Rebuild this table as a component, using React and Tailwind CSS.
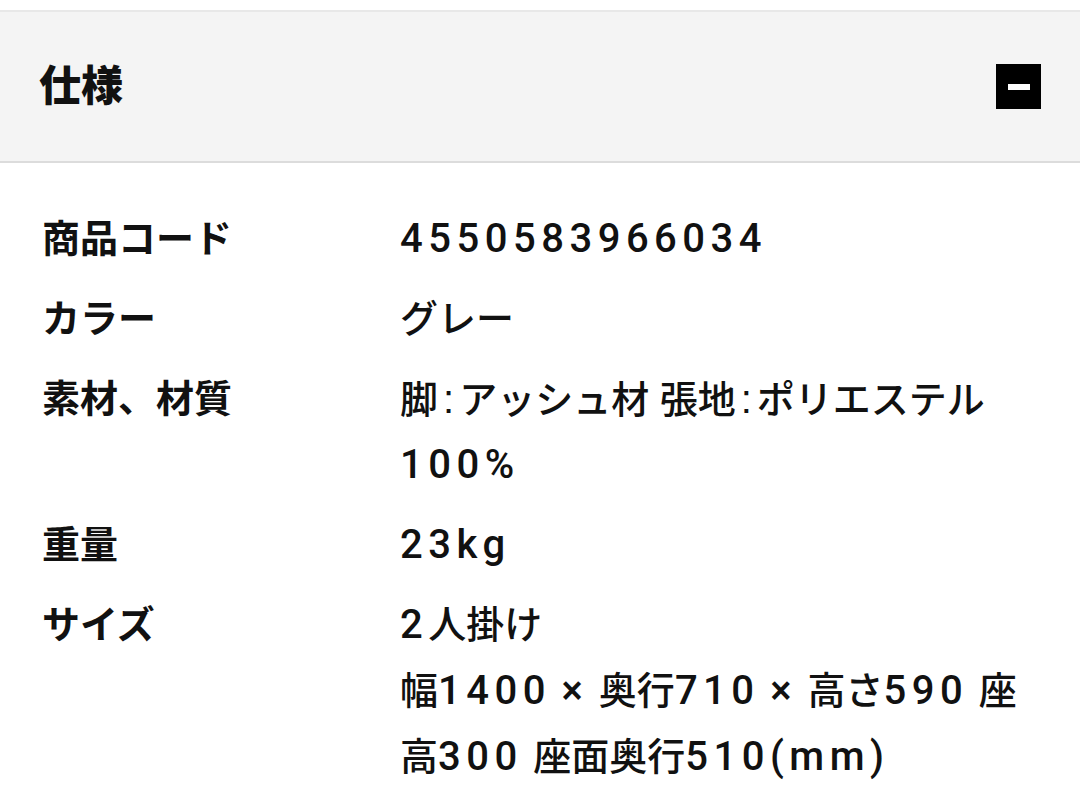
const specs = [
  { label: "商品コード", lines: ["4550583966034"] },
  { label: "カラー", lines: ["グレー"] },
  { label: "素材、材質", lines: ["脚:アッシュ材 張地:ポリエステル", "100%"] },
  { label: "重量", lines: ["23kg"] },
  {
    label: "サイズ",
    lines: ["2人掛け", "幅1400 × 奥行710 × 高さ590 座", "高300 座面奥行510(mm)"],
  },
];

// latin runs: a touch bigger + extra tracking so digits line up with the reference
function Text({ children }) {
  const parts = children.split(/([!-~×]+)/).filter(Boolean);
  return parts.map((p, i) => {
    if (p === ":") {
      return (
        <span key={i} className="mx-[5px] text-[40px]">
          :
        </span>
      );
    }
    if (/^[!-~×]+$/.test(p)) {
      return (
        <span key={i} className="font-[Roboto,sans-serif] text-[40px] tracking-[5.5px]">
          {p}
        </span>
      );
    }
    return <span key={i}>{p}</span>;
  });
}

export default function App() {
  return (
    <div
      className="min-h-screen bg-white text-[#111]"
      style={{ fontFamily: '"Liberation Sans", "Noto Sans CJK JP", sans-serif' }}
    >
      <div className="mt-[10px] border-t-2 border-b-2 border-t-[#e8e8e8] border-b-[#dcdcdc] bg-[#f4f4f4]">
        <div className="flex h-[149px] items-center justify-between pl-[39px] pr-[39px]">
          <h2 className="text-[42px] font-black leading-none">仕様</h2>
          <button className="flex h-[45px] w-[45px] items-center justify-center bg-black">
            <span className="block h-[6px] w-[22px] bg-white" />
          </button>
        </div>
      </div>

      <div className="flex flex-col gap-[14px] pl-[42px] pr-[30px] pt-[43px]">
        {specs.map((row) => (
          <div key={row.label} className="grid grid-cols-[358px_1fr] text-[38px] leading-[66px]">
            <div className="h-[66px] font-bold">{row.label}</div>
            <div className="font-medium">
              {row.lines.map((line) => (
                <div key={line} className="h-[66px] whitespace-nowrap">
                  <Text>{line}</Text>
                </div>
              ))}
            </div>
          </div>
        ))}
      </div>
    </div>
  );
}
